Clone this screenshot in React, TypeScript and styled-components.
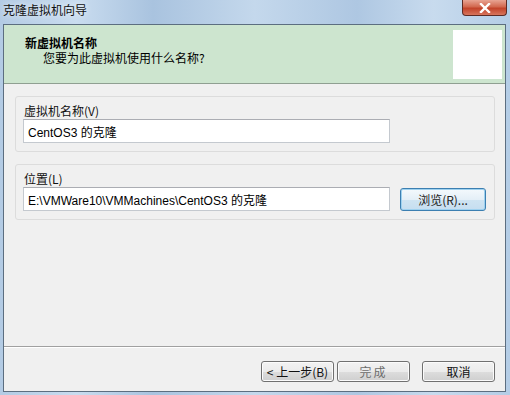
import React from "react";
import styled, { createGlobalStyle } from "styled-components";

const Global = createGlobalStyle`
  html, body { margin: 0; padding: 0; background: #b8cfe6; }
  body { font-family: "Liberation Sans", "Noto Sans CJK SC", sans-serif; font-size: 12px; color: #000; }
`;

const Window = styled.div`
  width: 510px;
  height: 395px;
  box-sizing: border-box;
  display: flex;
  flex-direction: column;
  background: linear-gradient(90deg, #b3cbe4 0%, #c9dcef 15%, #a9c3df 30%, #c4d8ec 50%, #aec7e2 70%, #c8dbee 85%, #b4cde6 100%);
  padding: 0 4px 3px 3px;
`;

const TitleBar = styled.div`
  height: 24px;
  display: flex;
  align-items: flex-start;
  justify-content: space-between;
  flex-shrink: 0;
`;

const Title = styled.div`
  font-family: "Noto Sans CJK SC", sans-serif;
  font-size: 12px;
  line-height: 14px;
  padding-top: 3px;
  color: #111;
  text-shadow: 0 0 6px rgba(255,255,255,0.9);
`;

const CloseBtn = styled.div`
  width: 45px;
  height: 16px;
  margin-right: -1px;
  border: 1px solid #5d2b24;
  border-top: none;
  border-radius: 0 0 4px 4px;
  background: linear-gradient(180deg, #e8a493 0%, #d2684f 45%, #c2432a 55%, #d7755c 100%);
  display: flex;
  align-items: center;
  justify-content: center;
  box-sizing: border-box;
`;

const Client = styled.div`
  flex: 1;
  display: flex;
  flex-direction: column;
  background: #f0f0f0;
  border: 1px solid #5c6e80;
`;

const Header = styled.div`
  height: 58px;
  flex-shrink: 0;
  background: #cde5cf;
  border-bottom: 1px solid #8f9f91;
  display: flex;
  justify-content: space-between;
  padding: 0 3px 0 21px;
`;

const HeaderText = styled.div`
  display: flex;
  flex-direction: column;
  padding-top: 10px;
  font-family: "Noto Sans CJK SC", sans-serif;
  font-size: 12px;
  line-height: 15px;
`;

const HeaderTitle = styled.div`
  font-weight: bold;
`;

const HeaderSub = styled.div`
  padding-left: 18px;
`;

const HeaderImage = styled.div`
  width: 49px;
  height: 49px;
  margin-top: 5px;
  background: #fff;
`;

const Body = styled.div`
  flex: 1;
  display: flex;
  flex-direction: column;
  padding: 12px 10px 0 11px;
  gap: 12px;
`;

const Group = styled.div`
  border: 1px solid #dcdcdc;
  border-radius: 3px;
  padding: 6px 8px 8px 7px;
  display: flex;
  flex-direction: column;
  gap: 1px;
`;

const Label = styled.div`
  font-family: "Noto Sans CJK SC", sans-serif;
  font-size: 12px;
  line-height: 15px;
  color: #111;
  padding-left: 1px;
`;

const Row = styled.div`
  display: flex;
  align-items: center;
  gap: 10px;
`;

const Input = styled.div`
  width: 367px;
  height: 24px;
  box-sizing: border-box;
  background: #fff;
  border: 1px solid #c4c9cf;
  border-top-color: #abadb3;
  padding: 0 4px;
  display: flex;
  align-items: center;
  font-family: "Liberation Sans", "Noto Sans CJK SC", sans-serif;
  font-size: 12px;
  white-space: nowrap;
`;

const Button = styled.div<{ $w: number; $focus?: boolean }>`
  width: ${(p) => p.$w}px;
  height: ${(p) => (p.$focus ? 23 : 21)}px;
  box-sizing: border-box;
  border: 1px solid ${(p) => (p.$focus ? "#3c7fb1" : "#707070")};
  border-radius: 3px;
  background: ${(p) =>
    p.$focus
      ? "linear-gradient(180deg, #f4f9fc 0%, #e4eff7 50%, #cfe4f2 51%, #c6def0 100%)"
      : "linear-gradient(180deg, #f2f2f2 0%, #ebebeb 50%, #dddddd 51%, #cfcfcf 100%)"};
  box-shadow: ${(p) => (p.$focus ? "inset 0 0 0 1px #9ed1ef" : "inset 0 0 0 1px #fbfbfb")};
  display: flex;
  align-items: center;
  justify-content: center;
  font-family: "Noto Sans CJK SC", sans-serif;
  font-size: 12px;
  color: ${(p) => (p.$focus ? "#222" : "#111")};
`;

const Separator = styled.div`
  height: 1px;
  background: #a0a0a0;
  border-bottom: 1px solid #fff;
  margin-top: auto;
`;

const Footer = styled.div`
  height: 43px;
  flex-shrink: 0;
  display: flex;
  justify-content: flex-end;
  align-items: flex-start;
  padding: 13px 10px 0 0;
  box-sizing: border-box;
`;

const FooterPair = styled.div`
  display: flex;
  gap: 3px;
  margin-right: 12px;
`;

const DisabledText = styled.span`
  color: #6d6d6d;
  letter-spacing: 2px;
`;

export default function App() {
  return (
    <>
      <Global />
      <Window>
        <TitleBar>
          <Title>克隆虚拟机向导</Title>
          <CloseBtn>
            <svg width="12" height="10" viewBox="0 0 12 10">
              <path d="M2 1 L10 9 M10 1 L2 9" stroke="#fff" strokeWidth="2.4" strokeLinecap="square" />
            </svg>
          </CloseBtn>
        </TitleBar>
        <Client>
          <Header>
            <HeaderText>
              <HeaderTitle>新虚拟机名称</HeaderTitle>
              <HeaderSub>您要为此虚拟机使用什么名称?</HeaderSub>
            </HeaderText>
            <HeaderImage />
          </Header>
          <Body>
            <Group>
              <Label>虚拟机名称(V)</Label>
              <Row>
                <Input>CentOS3 的克隆</Input>
              </Row>
            </Group>
            <Group>
              <Label>位置(L)</Label>
              <Row>
                <Input>E:\VMWare10\VMMachines\CentOS3 的克隆</Input>
                <Button $w={86} $focus>浏览(R)...</Button>
              </Row>
            </Group>
          </Body>
          <Separator />
          <Footer>
            <FooterPair>
              <Button $w={73}>&lt; 上一步(B)</Button>
              <Button $w={73}><DisabledText>完成</DisabledText></Button>
            </FooterPair>
            <Button $w={73}>取消</Button>
          </Footer>
        </Client>
      </Window>
    </>
  );
}
